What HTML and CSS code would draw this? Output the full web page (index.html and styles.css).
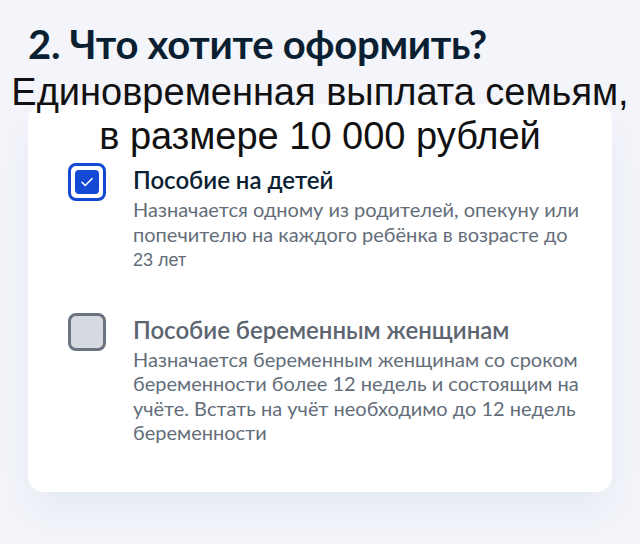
FILE: index.html
```html
<!DOCTYPE html>
<html lang="ru">
<head>
  <meta charset="UTF-8" />
  <meta name="viewport" content="width=device-width, initial-scale=1.0"/>
  <title>Что хотите оформить?</title>
  <link rel="stylesheet" href="styles.css">
</head>
<body>

  <h1 class="step-title">2. Что хотите оформить?</h1>

  <!-- Подпись поверх формы -->
  <p class="promo">Единовременная выплата семьям,<br>в размере 10 000 рублей</p>

  <div class="card">
    <label class="option">
      <span class="checkbox checked">
        <span class="checkbox-inner">
          <svg viewBox="0 0 16 16" width="16" height="16">
            <path d="M3 8.3l3.2 3.2L13 4.7" fill="none" stroke="#fff" stroke-width="1.6" stroke-linecap="round" stroke-linejoin="round"/>
          </svg>
        </span>
      </span>
      <span class="option-text">
        <span class="option-title">Пособие на детей</span>
        <span class="option-desc">Назначается одному из родителей, опекуну или попечителю на каждого ребёнка в возрасте до <span class="age">23 лет</span></span>
      </span>
    </label>

    <label class="option">
      <span class="checkbox"></span>
      <span class="option-text">
        <span class="option-title muted">Пособие беременным женщинам</span>
        <span class="option-desc">Назначается беременным женщинам со сроком беременности более 12 недель и состоящим на учёте. Встать на учёт необходимо до 12 недель беременности</span>
      </span>
    </label>
  </div>

</body>
</html>
```

FILE: styles.css
```css
body {
  margin: 0;
  background: #f3f5fa;
  font-family: Lato, 'Noto Sans', sans-serif;
  color: #0b1f33;
  height: 544px;
  overflow: hidden;
  position: relative;
}

.step-title {
  margin: 0;
  padding: 22px 0 0 28px;
  font-size: 40px;
  line-height: 44px;
  font-weight: 700;
  letter-spacing: -0.3px;
}

/* Подпись поверх карточки */
.promo {
  position: absolute;
  top: 70px;
  left: 0;
  right: 0;
  margin: 0;
  text-align: center;
  font-family: 'Liberation Sans', Arial, sans-serif;
  font-size: 38px;
  line-height: 44px;
  color: #111;
  z-index: 2;
}

.card {
  margin: 38px 28px 0;
  height: 388px;
  box-sizing: border-box;
  padding: 59px 10px 0 40px;
  background: #fff;
  border-radius: 16px;
  box-shadow: 0 22px 40px rgba(40, 60, 140, 0.06);
}

.option {
  display: flex;
  gap: 27px;
  align-items: flex-start;
}

.option + .option {
  margin-top: 40px;
}

.checkbox {
  flex: none;
  width: 38px;
  height: 38px;
  box-sizing: border-box;
  border: 3px solid #6b7480;
  border-radius: 8px;
  background: #d6dae3;
  display: flex;
  align-items: center;
  justify-content: center;
}

.checkbox.checked {
  border-color: #1449d4;
  background: #fff;
}

.checkbox-inner {
  width: 24px;
  height: 24px;
  border-radius: 4px;
  background: #1449d4;
  display: flex;
  align-items: center;
  justify-content: center;
}

.option-text {
  flex: none;
  display: flex;
  flex-direction: column;
  width: 448px;
}

.option-title {
  font-size: 24px;
  line-height: 34px;
  font-weight: 600;
  color: #0b1f33;
}

.option-title.muted {
  color: #5c6570;
}

.option-desc {
  font-size: 20px;
  line-height: 24.5px;
  color: #636d79;
}

.age {
  font-family: 'Liberation Sans', Arial, sans-serif;
  font-size: 18px;
}
```
